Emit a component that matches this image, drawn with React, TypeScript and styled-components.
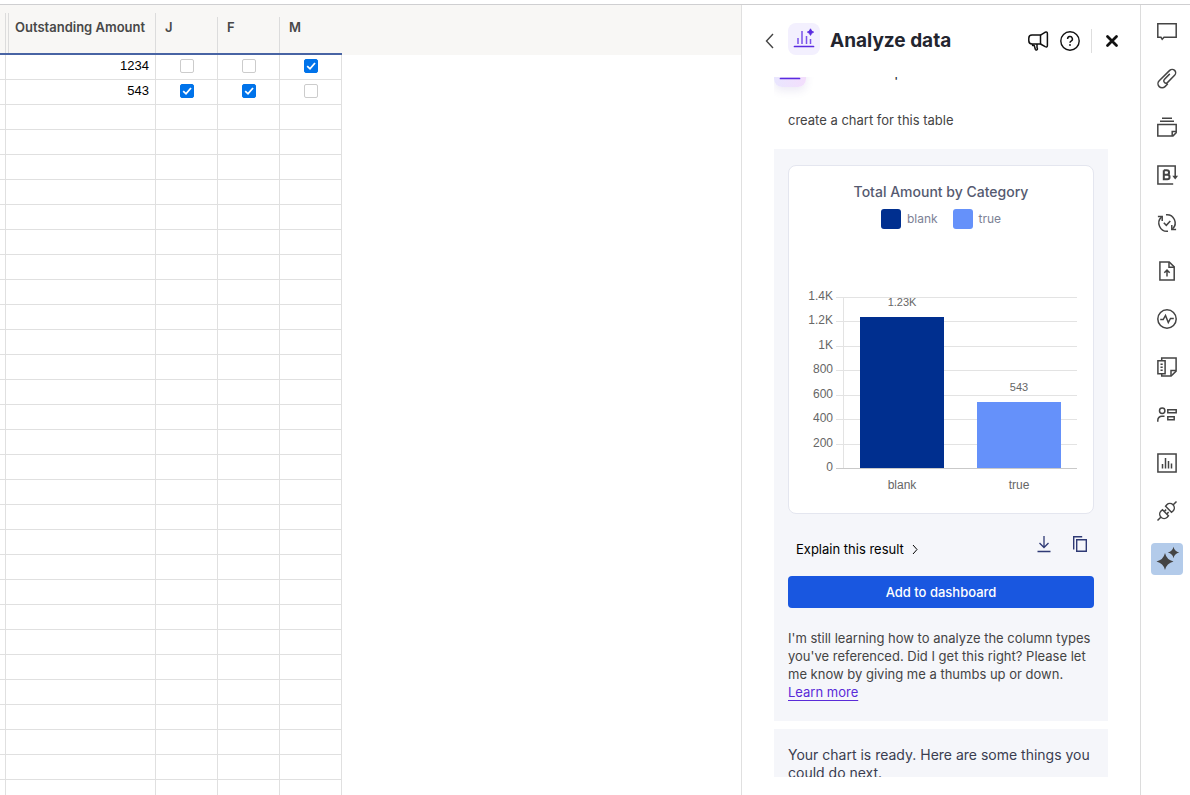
import React, { useState } from "react";
import styled, { createGlobalStyle, css } from "styled-components";

const Global = createGlobalStyle`
  *, *::before, *::after { box-sizing: border-box; }
  body { margin: 0; background: #fff; font-family: Inter, "Liberation Sans", sans-serif; font-size: 13px; color: #444; }
  button { font: inherit; color: inherit; border: 0; background: none; padding: 0; cursor: pointer; }
`;

const Page = styled.div`
  height: 100vh;
  padding-top: 4px;
  display: flex;
`;

const Workspace = styled.div`
  flex: 1;
  min-width: 0;
  display: flex;
  border-top: 1px solid #cfcfd1;
`;

/* ---------- grid ---------- */

const SheetArea = styled.main`
  flex: 1;
  min-width: 0;
  overflow: hidden;
  background: linear-gradient(#f8f7f5 50px, #fff 50px);
`;

const SheetTable = styled.table`
  table-layout: fixed;
  width: 342px;
  border-collapse: separate;
  border-spacing: 0;
`;

const SheetCol = styled.col<{ $width: number }>`
  width: ${(p) => p.$width}px;
`;

const HeadCell = styled.th<{ $tall?: boolean }>`
  height: 50px;
  padding: ${(p) => (p.$tall ? "8px" : "12px")} 0 0;
  border-bottom: 2px solid #4864a4;
  vertical-align: bottom;
  text-align: left;
  font-weight: 600;
  color: #484848;
`;

const HeadLabel = styled.div<{ $tall?: boolean; $last?: boolean }>`
  height: ${(p) => (p.$tall ? 40 : 36)}px;
  padding: ${(p) => (p.$tall ? "5px 0 0" : "1px 0 0 9px")};
  border-right: ${(p) => (p.$last ? "0" : "1px solid #dcdcdc")};
  line-height: 18px;
  white-space: nowrap;
`;

const PrimaryHeadLabel = styled(HeadLabel)`
  margin-left: 2px;
  padding-left: 6px;
  border-left: 1px solid #dcdcdc;
`;

const Cell = styled.td<{ $align?: "right" | "center" }>`
  height: 25px;
  padding: 0 ${(p) => (p.$align === "right" ? 6 : 0)}px 2px 0;
  border-right: 1px solid #e0e0e0;
  border-bottom: 1px solid #e0e0e0;
  text-align: ${(p) => p.$align ?? "left"};
  font-family: "Liberation Sans", Arial, sans-serif;
  line-height: 18px;
  color: #000;
`;

const CheckWrap = styled.label`
  display: grid;
  width: 14px;
  height: 14px;
  margin: 0 auto;
  > * { grid-area: 1 / 1; }
`;

const CheckInput = styled.input`
  appearance: none;
  width: 14px;
  height: 14px;
  margin: 0;
  border: 1px solid #ccc;
  border-radius: 2px;
  background: #fff;
  &:checked { background: #0073ea; border-color: #0073ea; }
`;

const CheckMark = styled.svg`
  pointer-events: none;
  z-index: 1;
`;

function Check({ label, initial }: { label: string; initial: boolean }) {
  const [on, setOn] = useState(initial);
  return (
    <CheckWrap>
      <CheckInput type="checkbox" aria-label={label} checked={on} onChange={() => setOn(!on)} />
      {on && (
        <CheckMark width="14" height="14" viewBox="0 0 14 14" fill="none" stroke="#fff" strokeWidth="1.8">
          <path d="M3.2 7.2 6 9.8 11 4" />
        </CheckMark>
      )}
    </CheckWrap>
  );
}

const months = ["J", "F", "M"];
const records = [
  { amount: 1234, paid: [false, false, true] },
  { amount: 543, paid: [true, true, false] },
];
const emptyRows = Array.from({ length: 28 }, (_, i) => i);

function Sheet() {
  return (
    <SheetArea>
      <SheetTable>
        <colgroup>
          <SheetCol $width={6} />
          <SheetCol $width={150} />
          {months.map((m) => <SheetCol key={m} $width={62} />)}
        </colgroup>
        <thead>
          <tr>
            <HeadCell $tall><HeadLabel $tall /></HeadCell>
            <HeadCell $tall><PrimaryHeadLabel $tall>Outstanding Amount</PrimaryHeadLabel></HeadCell>
            {months.map((m, i) => (
              <HeadCell key={m}><HeadLabel $last={i === months.length - 1}>{m}</HeadLabel></HeadCell>
            ))}
          </tr>
        </thead>
        <tbody>
          {records.map((r) => (
            <tr key={r.amount}>
              <Cell />
              <Cell $align="right">{r.amount}</Cell>
              {r.paid.map((on, i) => (
                <Cell key={i} $align="center"><Check label={`${months[i]} ${r.amount}`} initial={on} /></Cell>
              ))}
            </tr>
          ))}
          {emptyRows.map((i) => (
            <tr key={i}><Cell /><Cell /><Cell /><Cell /><Cell /></tr>
          ))}
        </tbody>
      </SheetTable>
    </SheetArea>
  );
}

/* ---------- panel ---------- */

const Panel = styled.aside`
  width: 399px;
  flex: none;
  display: flex;
  flex-direction: column;
  border-left: 1px solid #e0e0e0;
`;

const PanelHeader = styled.header`
  height: 72px;
  flex: none;
  padding: 18px 19px 0 22px;
  display: flex;
  align-items: flex-start;
`;

const HeaderRow = styled.div`
  flex: 1;
  height: 36px;
  display: flex;
  align-items: center;
`;

const IconButton = styled.button`
  display: grid;
  place-items: center;
  flex: none;
`;

const Badge = styled.span<{ $gradient?: boolean }>`
  width: 32px;
  height: 32px;
  flex: none;
  border-radius: 8px;
  display: grid;
  place-items: center;
  background: #f3f0fe;
  ${(p) => p.$gradient && css`
    background: linear-gradient(90deg, #e9e6fe, #f3defc);
    box-shadow: 0 4px 8px rgba(80, 60, 160, 0.1);
  `}
`;

const HeaderBadge = styled(Badge)`
  align-self: flex-start;
  margin: 0 10px 0 14px;
`;

const PanelTitle = styled.h2`
  flex: 1;
  margin: 0;
  font-size: 19px;
  line-height: 24px;
  font-weight: 700;
  color: #23252f;
`;

const HeaderTools = styled.div`
  display: flex;
  align-items: center;
  gap: 11px;
  color: #111;
`;

const Divider = styled.span`
  width: 1px;
  height: 24px;
  background: #dedede;
`;

const Thread = styled.section`
  flex: 1;
  min-height: 0;
  margin: 0 32px 18px;
  overflow: hidden;
`;

const Intro = styled.div`
  margin-top: -22px;
  height: 32px;
  display: flex;
  gap: 24px;
  align-items: flex-start;
  font-size: 14px;
  line-height: 18px;
  color: #23252f;
`;

const IntroText = styled.span`
  padding-top: 8px;
`;

const UserMessage = styled.p`
  margin: 0;
  padding: 24px 14px 20px;
  line-height: 18px;
`;

const Bubble = styled.div`
  padding: 16px 14px 20px;
  margin-bottom: 8px;
  background: #f5f6fa;
`;

const ChartCard = styled.figure`
  margin: 0;
  height: 349px;
  padding-top: 17px;
  display: flex;
  flex-direction: column;
  background: #fff;
  border: 1px solid #e4e6ef;
  border-radius: 8px;
`;

const ChartTitle = styled.figcaption`
  text-align: center;
  font-size: 14px;
  line-height: 18px;
  font-weight: 500;
  color: #555a70;
`;

const Legend = styled.ul`
  display: flex;
  justify-content: center;
  gap: 15px;
  margin: 8px 0 56px;
  padding: 0;
  list-style: none;
  font-size: 12px;
  color: #7c8195;
`;

const LegendItem = styled.li`
  display: flex;
  align-items: center;
  gap: 6px;
  line-height: 20px;
`;

const Swatch = styled.span<{ $color: string }>`
  width: 20px;
  height: 20px;
  border-radius: 3px;
  background: ${(p) => p.$color};
`;

const Plot = styled.svg`
  display: block;
  width: 100%;
  font-family: "Liberation Sans", Arial, sans-serif;
  font-size: 12px;
  fill: #666;
`;

const Actions = styled.div`
  display: flex;
  align-items: flex-end;
  gap: 20px;
  height: 44px;
  padding: 0 6px 0 8px;
  margin-bottom: 18px;
  color: #2f3a75;
`;

const ExplainButton = styled.button`
  display: flex;
  align-items: center;
  gap: 8px;
  margin-right: auto;
  line-height: 18px;
  color: #000;
`;

const ToolButton = styled(IconButton)`
  padding-bottom: 5px;
`;

const PrimaryButton = styled.button`
  width: 100%;
  height: 32px;
  border-radius: 4px;
  background: #1957e0;
  color: #fff;
  font-weight: 500;
`;

const Note = styled.p`
  margin: 21px 0 0;
  line-height: 18px;
`;

const NoteLink = styled.a`
  display: block;
  width: fit-content;
  color: #5a2bd8;
  text-decoration: underline;
  text-underline-offset: 3px;
`;

const NextSteps = styled.p`
  margin: 0;
  padding-top: 1px;
  font-size: 14px;
  line-height: 18px;
  color: #3a3d50;
`;

const Chevron = ({ d, w, h, weight }: { d: string; w: number; h: number; weight: number }) => (
  <svg width={w} height={h} viewBox={`0 0 ${w} ${h}`} fill="none" stroke="currentColor" strokeWidth={weight}><path d={d} /></svg>
);

const ChartGlyph = () => (
  <svg width="22" height="22" viewBox="0 0 22 22" fill="none" stroke="#7a52ea" strokeWidth="1.5">
    <path d="M5 10v6M9 3v13M13.5 8v8M17.5 11v5" />
    <path d="M1.5 18.5h19" stroke="#5a2be0" strokeWidth="1.7" strokeLinecap="round" />
    <path d="M17.5.8 18.7 3 20.700 4.100 18.700 5.300 17.500 7.400 16.300 5.300 14.300 4.100 16.300 3z" fill="#5a2be0" stroke="#5a2be0" strokeWidth=".8" />
  </svg>
);

const scale = ["1.4K", "1.2K", "1K", "800", "600", "400", "200", "0"];
const lineY = [12, 36, 61, 85, 110, 134, 159, 183];
const series = [
  { name: "blank", label: "1.23K", color: "#002f8f", x: 71, top: 32 },
  { name: "true", label: "543", color: "#6591fa", x: 188, top: 117 },
];

function BarChart() {
  return (
    <Plot viewBox="0 0 304 216" role="img" aria-label="Total Amount by Category">
      {scale.map((s, i) => (
        <g key={s}>
          <path d={`M47 ${lineY[i] + 0.5}H288`} stroke={s === "0" ? "#c9c9c9" : "#e3e3e3"} />
          <text x="44" y={lineY[i] + 3} textAnchor="end">{s}</text>
        </g>
      ))}
      <path d="M54.5 12V183" stroke="#e3e3e3" />
      {series.map((b) => (
        <g key={b.name}>
          <rect x={b.x} y={b.top} width="84" height={183 - b.top} fill={b.color} />
          <text x={b.x + 42} y={b.top - 11} fontSize="11" textAnchor="middle">{b.label}</text>
          <text x={b.x + 42} y="204" textAnchor="middle">{b.name}</text>
        </g>
      ))}
    </Plot>
  );
}

function AnalyzePanel() {
  return (
    <Panel aria-label="Analyze data">
      <PanelHeader>
        <HeaderRow>
          <IconButton aria-label="Back"><Chevron d="M9 1 2.5 8 9 15" w={10} h={16} weight={1.4} /></IconButton>
          <HeaderBadge><ChartGlyph /></HeaderBadge>
          <PanelTitle>Analyze data</PanelTitle>
          <HeaderTools>
            <IconButton aria-label="Feedback">
              <svg width="22" height="20" viewBox="-1 0 22 20" fill="none" stroke="currentColor" strokeWidth="1.5" strokeLinejoin="round">
                <path d="M12.500 4.100H4A3.200 3.200 0 0 0 .8 7.300v2.500A3.200 3.200 0 0 0 4 13h8.500z" />
                <path d="M12.500 4.100 17 1.300Q19.400.3 19.400 2.800V14.500Q19.400 16.700 17.200 15.600L12.500 13" />
                <path d="M4.600 13v1.600h1.700l1 3.600q.4 1 1.300.8 1-.3.800-1.300L9 16.300V13" />
              </svg>
            </IconButton>
            <IconButton aria-label="Help">
              <svg width="20" height="20" viewBox="0 0 20 20" fill="none" stroke="currentColor" strokeWidth="1.4">
                <circle cx="10" cy="10" r="9.2" />
                <path d="M7.600 8a2.400 2.400 0 1 1 3.500 2.100c-.8.4-1.100.8-1.100 1.600" strokeWidth="1.5" />
                <circle cx="10" cy="14" r=".9" fill="currentColor" stroke="none" />
              </svg>
            </IconButton>
            <Divider />
            <IconButton aria-label="Close">
              <svg width="18" height="18" viewBox="0 0 18 18" fill="none" stroke="currentColor" strokeWidth="2.8" strokeLinecap="round">
                <path d="m4.500 4.500 9 9m0-9-9 9" />
              </svg>
            </IconButton>
          </HeaderTools>
        </HeaderRow>
      </PanelHeader>
      <Thread>
        <Intro>
          <Badge $gradient><ChartGlyph /></Badge>
          <IntroText>Let me explore all of the data in here</IntroText>
        </Intro>
        <UserMessage>create a chart for this table</UserMessage>
        <Bubble>
          <ChartCard>
            <ChartTitle>Total Amount by Category</ChartTitle>
            <Legend>
              {series.map((s) => (
                <LegendItem key={s.name}><Swatch $color={s.color} />{s.name}</LegendItem>
              ))}
            </Legend>
            <BarChart />
          </ChartCard>
          <Actions>
            <ExplainButton>Explain this result <Chevron d="M1 1 5 5.500 1 10" w={6} h={11} weight={1} /></ExplainButton>
            <ToolButton aria-label="Download">
              <svg width="16" height="18" viewBox="0 0 16 18" fill="none" stroke="currentColor" strokeWidth="1.3">
                <path d="M8 1v11.500M3.500 8 8 12.500 12.500 8M1.500 16.500h13" />
              </svg>
            </ToolButton>
            <ToolButton aria-label="Copy">
              <svg width="16" height="18" viewBox="0 0 16 18" fill="none" stroke="currentColor" strokeWidth="1.4">
                <path d="M1.700 14.500V1.700h8.500" /><path d="M4.700 4.700h9.600v11.600H4.700z" />
              </svg>
            </ToolButton>
          </Actions>
          <PrimaryButton>Add to dashboard</PrimaryButton>
          <Note>
            I'm still learning how to analyze the column types you've referenced. Did I get this right? Please let me know by giving me a thumbs up or down.
            <NoteLink href="#learn">Learn more</NoteLink>
          </Note>
        </Bubble>
        <Bubble><NextSteps>Your chart is ready. Here are some things you could do next.</NextSteps></Bubble>
      </Thread>
    </Panel>
  );
}

/* ---------- right rail ---------- */

const Rail = styled.nav`
  width: 50px;
  flex: none;
  padding: 10px 0 0 10px;
  display: flex;
  flex-direction: column;
  gap: 16px;
  border-left: 1px solid #dcdcdc;
`;

const RailButton = styled(IconButton)<{ $active?: boolean }>`
  width: 32px;
  height: 32px;
  border-radius: 4px;
  color: #444;
  background: ${(p) => (p.$active ? "#b3cbea" : "transparent")};
`;

const railItems: { label: string; art: React.ReactNode }[] = [
  { label: "Conversations", art: <path d="M.8 2.800h18.400v13.500H7l-1.800 2-1.200-2H.8z" /> },
  { label: "Attachments", art: <path d="M12.800 5.300 7.300 10.900a2.200 2.200 0 0 0 3.100 3.100l7.200-7.300a3.400 3.400 0 0 0-4.900-4.900L2.200 12.200a4.100 4.100 0 0 0 5.800 5.800l2.800-2.800" transform="translate(0 -.4)" /> },
  { label: "Proofs", art: <><path d="M5 1.200h10M3 4.200h14" /><path d="M.8 7.500h18.400v8.200l-3.200 3.200H.8z" /><path d="M19.200 14.500h-4v4.400" /></> },
  { label: "Brandfolder", art: <><path d="M18.200 13V.9H.9v18.200h15.300" /><path d="m15.300 10.800 2.900 3.700 2.900-3.700z" fill="currentColor" stroke="none" /><path d="M6.800 5.300v9h3.500a2.200 2.200 0 0 0 0-4.500H6.800m0 0h3a2.200 2.200 0 0 0 0-4.500h-3" strokeWidth="2" /></> },
  { label: "Update requests", art: <><path d="M11 18.300A8.300 8.300 0 0 1 4.500 4M9 1.700A8.300 8.300 0 0 1 15.500 16" /><path d="M.9 3.500h4.300V8M19.100 16.500h-4.300V12" /><path d="m6.800 9.800 2.500 2.500 4-4.300" /></> },
  { label: "Publish", art: <><path d="M2.900.9h9.300l5 5v13.200H2.900z" /><path d="M12 1v5.200h5.200M10 15.500V9.300M7.300 11.800 10 9.100l2.700 2.700" /></> },
  { label: "Activity log", art: <><circle cx="10" cy="10" r="9.2" /><path d="M3.200 10.500h3l2.300-4 2.800 7 2.200-4h3.300" /></> },
  { label: "Summary", art: <><path d="M4.700 3.200V1.100h14.400v13l-5 5H4.700v-2.300" /><path d="M19 13.600h-5v5.300M.9 3.700h7.200v13H.9z" /><path d="M3.500 7.200h2.200M3.500 10.200h2.200M3.500 13.200h2.200" /></> },
  { label: "Contacts", art: <><circle cx="5.200" cy="5.700" r="2.700" /><path d="M.8 16.700v-1.500a4 4 0 0 1 4-4h2.700" /><path d="M10.800 4.700h8.400v3h-8.400zM10.800 11.700h6.400v3h-6.400z" /></> },
  { label: "Charts", art: <><path d="M.9.9h18.200v18.200H.9z" /><path d="M5.500 11v4.500M8.500 5v10.500M11.500 8v7.500M14.500 10.500v5" /></> },
  { label: "Connections", art: <><path d="M.5 19.500 4 16M16 4 19.500.5" /><path d="m5.500 8.800 5.900 5.900-1.200 1.500a4.400 4.400 0 0 1-6.200 0 4.400 4.400 0 0 1 0-6.200zM14.500 11.200 8.600 5.300l1.200-1.500a4.400 4.400 0 0 1 6.200 0 4.400 4.400 0 0 1 0 6.200z" /><path d="m7.200 10.500 1.900-1.900M9.700 13l1.900-1.900" /></> },
  { label: "AI tools", art: <g fill="currentColor" stroke="none"><path d="M8 4Q9.600 10.900 16.500 12.500 9.600 14.100 8 21 6.400 14.100-.5 12.500 6.400 10.900 8 4z" /><path d="M16.500-2.200Q17.500 2.500 22.200 3.500 17.500 4.500 16.500 9.200 15.500 4.500 10.800 3.500 15.500 2.500 16.500-2.200z" /></g> },
];

function ToolRail() {
  return (
    <Rail aria-label="Tools">
      {railItems.map((item) => (
        <RailButton key={item.label} aria-label={item.label} $active={item.label === "AI tools"}>
          <svg width="20" height="20" viewBox="0 0 20 20" overflow="visible" fill="none" stroke="currentColor" strokeWidth="1.5">{item.art}</svg>
        </RailButton>
      ))}
    </Rail>
  );
}

export default function App() {
  return (
    <>
      <Global />
      <Page>
        <Workspace>
          <Sheet />
          <AnalyzePanel />
          <ToolRail />
        </Workspace>
      </Page>
    </>
  );
}
